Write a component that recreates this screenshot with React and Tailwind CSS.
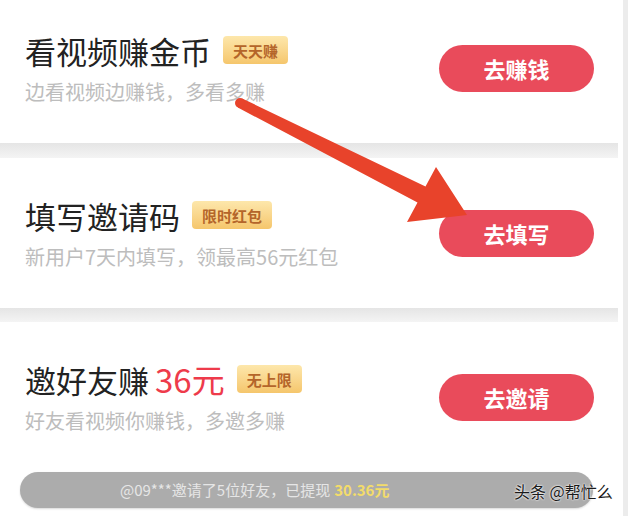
import React from "react";

const font = { fontFamily: '"Noto Sans CJK SC", "Noto Sans", sans-serif' };

function Badge({ children }) {
  return (
    <span className="ml-3 inline-flex h-[28px] items-center rounded-[4px] bg-gradient-to-b from-[#fde7ab] to-[#f5c66c] px-[10px] text-[15px] font-bold leading-none text-[#b4652a]">
      {children}
    </span>
  );
}

function Btn({ children }) {
  return (
    <button className="flex h-[47px] w-[155px] shrink-0 items-center justify-center rounded-full bg-[#e94b5b] text-[22px] font-bold text-white">
      {children}
    </button>
  );
}

function Row({ title, extra, badge, sub, btn, pt }) {
  return (
    <div className={`flex items-center pl-[25px] pr-[24px] ${pt}`}>
      <div className="flex-1">
        <div className="flex h-[36px] items-center">
          <span className="text-[31px] leading-none text-[#222]">{title}</span>
          {extra}
          <Badge>{badge}</Badge>
        </div>
        <div className="mt-[12px] text-[20px] leading-[24px] text-[#bdbdbd]">{sub}</div>
      </div>
      <Btn>{btn}</Btn>
    </div>
  );
}

export default function App() {
  return (
    <div className="relative flex h-[516px] w-[628px] overflow-hidden bg-white" style={font}>
      <div className="flex w-[618px] flex-col">
        <div className="h-[143px]">
          <Row
            title="看视频赚金币"
            badge="天天赚"
            sub="边看视频边赚钱，多看多赚"
            btn="去赚钱"
            pt="pt-[32px]"
          />
        </div>
        <div className="h-[15px] bg-gradient-to-b from-[#e5e5e5] to-[#f4f4f4]" />
        <div className="h-[150px]">
          <Row
            title="填写邀请码"
            badge="限时红包"
            sub="新用户7天内填写，领最高56元红包"
            btn="去填写"
            pt="pt-[39px]"
          />
        </div>
        <div className="h-[14px] bg-gradient-to-b from-[#e5e5e5] to-[#f4f4f4]" />
        <div className="flex-1">
          <Row
            title="邀好友赚"
            extra={<span className="ml-[6px] text-[33px] leading-none text-[#ee3b4b]">36元</span>}
            badge="无上限"
            sub="好友看视频你赚钱，多邀多赚"
            btn="去邀请"
            pt="pt-[39px]"
          />
          <div className="ml-[20px] mt-[39px] flex h-[36px] w-[573px] items-center rounded-full bg-[#acacac] pl-[100px] text-[15px] text-[#e6e6e6] shadow-[0_1px_2px_rgba(0,0,0,0.15)]">
            <span>@09***邀请了5位好友，已提现 </span>
            <span className="ml-[4px] font-bold text-[#f3dc6a]">30.36元</span>
          </div>
        </div>
      </div>
      <div className="w-[5px] bg-white" />
      <div className="w-[5px] bg-[#ececec]" />

      <svg className="absolute left-0 top-0" width="628" height="516" viewBox="0 0 628 516">
        <polygon
          points="242.2,98.5 425.5,186.4 436,167 467,215 407,222 417.5,202.6 237.8,107.5"
          fill="#e8432b"
        />
        <circle cx="240" cy="103" r="5" fill="#e8432b" />
      </svg>

      <div
        className="absolute left-[514px] top-[483px] text-[16px] leading-none text-[#1a1a1a]"
        style={{ textShadow: "0 0 2px #fff, 0 0 2px #fff" }}
      >
        头条 @帮忙么
      </div>
    </div>
  );
}
